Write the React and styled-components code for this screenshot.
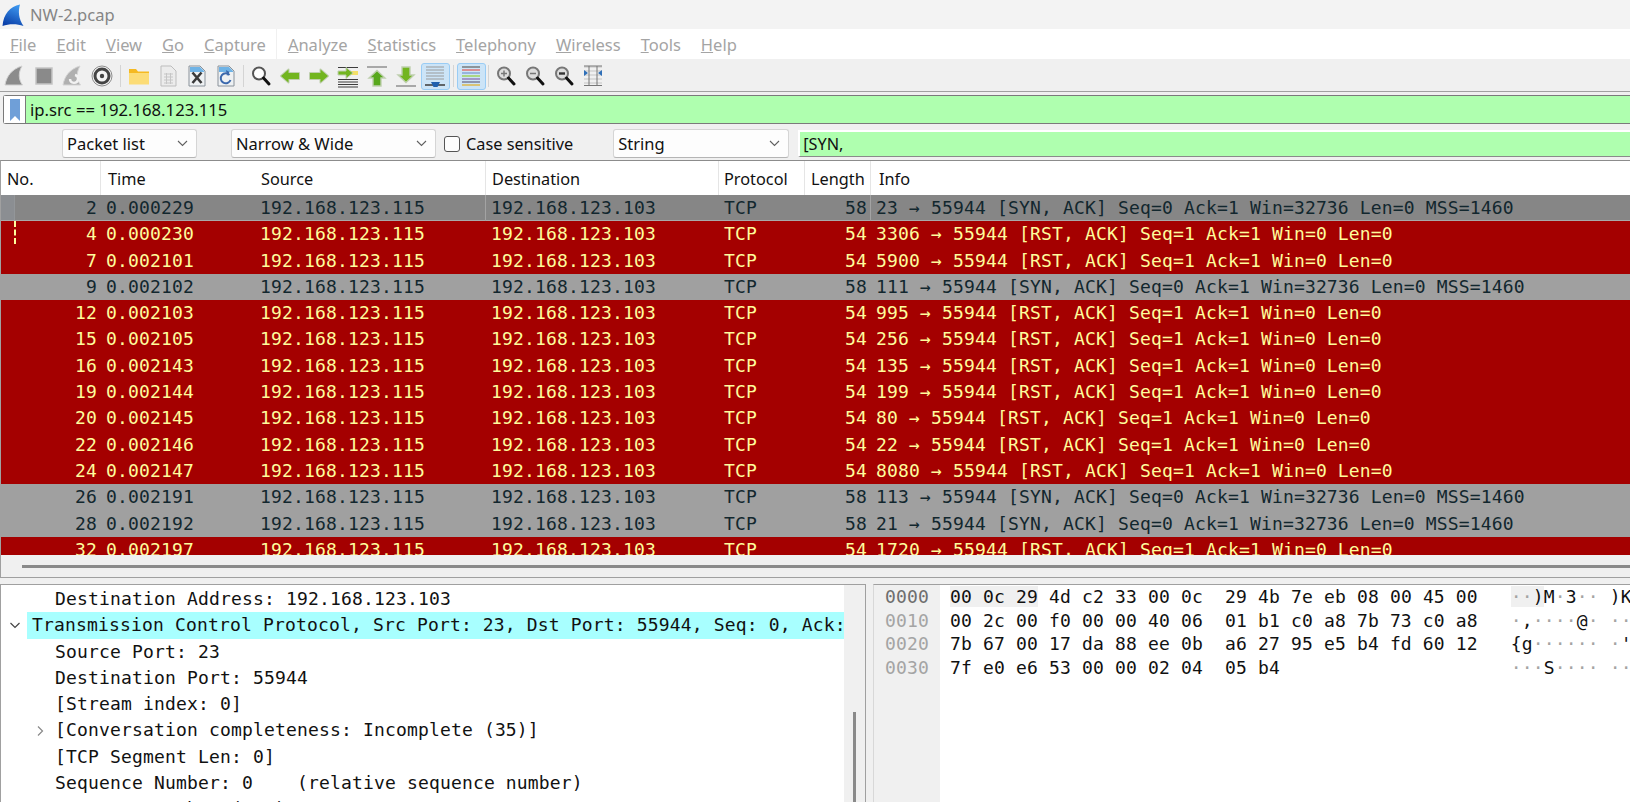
import React from 'react';
import styled, { createGlobalStyle } from 'styled-components';

const GlobalStyle = createGlobalStyle`
    html, body {
        margin: 0;
        padding: 0;
        background: #f0f0f0;
    }
`;

const uiFont = `"Noto Sans", "Open Sans", sans-serif`;
const monoFont = `"DejaVu Sans Mono", "Liberation Mono", monospace`;

const Window = styled.div`
    background: #f0f0f0;
    display: flex;
    flex-direction: column;
    font-family: ${uiFont};
    height: 802px;
    overflow: hidden;
    width: 1630px;
`;

const TitleBar = styled.div`
    align-items: center;
    background: #f3f3f3;
    color: #858585;
    display: flex;
    flex-shrink: 0;
    font-size: 16.5px;
    gap: 5px;
    height: 29px;
    padding-left: 1px;
`;

const MenuBar = styled.div`
    align-items: center;
    background: #fff;
    border-bottom: 1px solid #f0f0f0;
    display: flex;
    flex-shrink: 0;
    height: 30px;
    padding-left: 10px;
`;

const MenuItem = styled.span`
    color: #a4a4a4;
    font-size: 16.5px;
    margin-right: 20px;

    &::first-letter {
        text-decoration: underline;
    }
`;

const MenuDivider = styled.span`
    background: #f0f0f0;
    height: 30px;
    margin-right: 11px;
    margin-left: -10px;
    width: 1px;
`;

const Toolbar = styled.div`
    align-items: center;
    background: #f0f0f0;
    border-bottom: 1px solid #a0a0a0;
    box-sizing: border-box;
    display: flex;
    flex-shrink: 0;
    height: 32px;
    padding: 1px 0 0 0.5px;
`;

const ToolButton = styled.div`
    align-items: center;
    background: ${(p) => (p.$active ? '#cce4f7' : 'transparent')};
    border: 1px solid ${(p) => (p.$active ? '#99ccf5' : 'transparent')};
    border-radius: 3px;
    box-sizing: border-box;
    display: flex;
    flex-shrink: 0;
    height: 27px;
    justify-content: center;
    width: 29px;
`;

const ToolSeparator = styled.span`
    background: #d4d4d4;
    flex-shrink: 0;
    height: 22px;
    margin: 0 ${(p) => p.$margin}px;
    width: 1px;
`;

const FilterBar = styled.div`
    align-items: stretch;
    border: solid #7a7a7a;
    border-radius: 3px 0 0 3px;
    border-width: 1px 0 1px 1px;
    box-sizing: border-box;
    display: flex;
    flex-shrink: 0;
    height: 29px;
    margin: 3px 0 3px 3px;
`;

const BookmarkButton = styled.div`
    align-items: center;
    background: #fff;
    border-right: 1px solid #7a7a7a;
    display: flex;
    flex-shrink: 0;
    justify-content: center;
    width: 21px;
`;

const FilterText = styled.div`
    align-items: center;
    background: #afffaf;
    color: #111;
    display: flex;
    flex: 1;
    font-size: 16.7px;
    padding-left: 4px;
`;

const FindBar = styled.div`
    align-items: center;
    display: flex;
    flex-shrink: 0;
    height: 33px;
    padding-left: 62px;
`;

const Select = styled.div`
    align-items: center;
    background: #fdfdfd;
    border: 1px solid #d5d5d5;
    border-bottom-color: #b5b5b5;
    border-radius: 3px;
    box-sizing: border-box;
    color: #111;
    display: flex;
    flex-shrink: 0;
    font-size: 16.5px;
    height: 29px;
    justify-content: space-between;
    margin-right: ${(p) => p.$gap}px;
    padding: 0 8px 0 4px;
    width: ${(p) => p.$width}px;
`;

const CaseCheck = styled.label`
    align-items: center;
    color: #111;
    display: flex;
    flex-shrink: 0;
    font-size: 16.3px;
    gap: 6px;
    margin-right: 40px;
`;

const CheckBox = styled.span`
    background: #fdfdfd;
    border: 1px solid #555;
    border-radius: 3px;
    box-sizing: border-box;
    height: 16px;
    width: 16px;
`;

const FindInput = styled.div`
    align-items: center;
    background: #afffaf;
    border-bottom: 1px solid #8a8a8a;
    border-left: 2px solid #fff;
    border-top: 2px solid #fff;
    box-sizing: border-box;
    color: #111;
    display: flex;
    flex: 1;
    font-size: 16.3px;
    height: 27px;
    padding-left: 3px;
`;

const PacketPane = styled.div`
    border-left: 1px solid #a0a0a0;
    border-top: 1px solid #8c8c8c;
    display: flex;
    flex-direction: column;
    flex-shrink: 0;
    height: 417px;
`;

const columns = '100px 154px 231px 233px 86px 66px 1fr';

const HeaderRow = styled.div`
    background: #fff;
    display: grid;
    flex-shrink: 0;
    font-size: 16.3px;
    grid-template-columns: ${columns};
    height: 34px;
`;

const HeaderCell = styled.div`
    align-items: center;
    border-right: 1px solid ${(p) => (p.$plain ? 'transparent' : '#e5e5e5')};
    box-sizing: border-box;
    color: #111;
    display: flex;
    padding: 1px 0 0 ${(p) => p.$pad || 6}px;
`;

const PacketRows = styled.div`
    flex-shrink: 0;
    height: 360px;
    overflow: hidden;
`;

const palette = {
    selected: { background: '#868686', color: '#12272e' },
    ack: { background: '#a0a0a0', color: '#12272e' },
    reset: { background: '#a40000', color: '#fffc9c' },
};

const PacketRow = styled.div`
    background: ${(p) => palette[p.$kind].background};
    box-shadow: ${(p) => (p.$kind === 'selected' ? 'inset 0 -1px 0 #a9a9a9' : 'none')};
    color: ${(p) => palette[p.$kind].color};
    display: grid;
    font-family: ${monoFont};
    font-size: 18px;
    grid-template-columns: ${columns};
    height: 26.3px;
    letter-spacing: 0.16px;
    line-height: 25px;
    white-space: pre;
`;

const Cell = styled.div`
    border-right: 1px solid ${(p) => (p.$rule ? '#a3a3a3' : 'transparent')};
    box-sizing: border-box;
    overflow: hidden;
    padding: ${(p) => (p.$end ? '0 3px 0 0' : '0 0 0 5px')};
    position: relative;
    text-align: ${(p) => (p.$end ? 'right' : 'left')};
`;

const RelatedMark = styled.span`
    border-left: 2px dashed #fffc9c;
    height: 23px;
    left: 13px;
    position: absolute;
    top: 0;
`;

const SelectedStrip = styled.span`
    background: #8b8e92;
    border-right: 1px solid #939699;
    bottom: 1px;
    left: 0;
    position: absolute;
    top: 0;
    width: 13px;
`;

const HScroll = styled.div`
    align-items: center;
    border-bottom: 1px solid #a0a0a0;
    display: flex;
    flex: 1;
    padding-left: 21px;
`;

const HThumb = styled.div`
    background: #8a8a8a;
    flex: 1;
    height: 3px;
`;

const BottomArea = styled.div`
    display: flex;
    flex: 1;
    gap: 7px;
    margin-top: 6px;
    min-height: 0;
`;

const DetailPane = styled.div`
    background: #fff;
    border-left: 1px solid #a0a0a0;
    border-right: 1px solid #a0a0a0;
    border-top: 1px solid #a0a0a0;
    box-sizing: border-box;
    display: flex;
    flex-shrink: 0;
    width: 866px;
`;

const DetailTree = styled.div`
    flex: 1;
    font-family: ${monoFont};
    font-size: 18px;
    letter-spacing: 0.16px;
    min-width: 0;
    overflow: hidden;
    padding-top: 1px;
`;

const TreeRow = styled.div`
    align-items: center;
    color: #111;
    display: flex;
    height: 26.3px;
    padding-left: ${(p) => p.$indent}px;
    position: relative;
    white-space: pre;
`;

const TreeLabel = styled.span`
    align-self: stretch;
    background: ${(p) => (p.$selected ? '#a8ffff' : 'transparent')};
    flex: ${(p) => (p.$selected ? 1 : '0 0 auto')};
    line-height: 26px;
    overflow: hidden;
    padding-left: ${(p) => (p.$selected ? 5 : 0)}px;
`;

const Expander = styled.svg`
    flex-shrink: 0;
    height: 12px;
    margin-right: ${(p) => p.$gap}px;
    width: 12px;
`;

const DetailScroll = styled.div`
    background: #f0f0f0;
    box-sizing: border-box;
    display: flex;
    flex-direction: column;
    flex-shrink: 0;
    justify-content: flex-end;
    padding: 0 9px;
    width: 21px;
`;

const VThumb = styled.div`
    background: #8a8a8a;
    height: 90px;
    width: 3px;
`;

const HexPane = styled.div`
    background: #fff;
    border-left: 1px solid #d8d8d8;
    border-top: 1px solid #a0a0a0;
    display: flex;
    flex: 1;
    font-family: ${monoFont};
    font-size: 18px;
    letter-spacing: 0.16px;
    min-width: 0;
    overflow: hidden;
`;

const OffsetColumn = styled.div`
    background: #f0f0f0;
    flex-shrink: 0;
    padding-left: 11px;
    width: 55px;
`;

const Offset = styled.div`
    color: ${(p) => (p.$current ? '#6e6e6e' : '#a4a4a4')};
    height: 23.7px;
    line-height: 24px;
`;

const HexColumn = styled.div`
    flex: 1;
    min-width: 0;
    padding-left: 10px;
`;

const HexLine = styled.div`
    color: #111;
    height: 23.7px;
    line-height: 24px;
    white-space: pre;
`;

const HexMark = styled.span`
    background: #f0f0f0;
`;

const Dim = styled.span`
    color: #a4a4a4;
`;

function ToolIcon({ children }) {
    return (
        <svg width="24" height="24" viewBox="0 0 24 24">
            {children}
        </svg>
    );
}

const FinShape = 'M2 21 C3.5 12 9 5 19 2 C15.5 8 15 15 19.5 21 Z';

function SharkLogo() {
    return (
        <svg width="24" height="24" viewBox="0 0 24 24">
            <defs>
                <linearGradient id="logoFin" x1="0.7" y1="0" x2="0.3" y2="1">
                    <stop offset="0" stopColor="#3f9bf2" />
                    <stop offset="1" stopColor="#0a3fa8" />
                </linearGradient>
            </defs>
            <path d="M1.5 23 C2.5 11 9 3.5 19 1.5 C17 8 17.5 16 22.5 23 C16 20.5 8 20.5 1.5 23 Z" fill="url(#logoFin)" />
        </svg>
    );
}

function MagnifierIcon({ sign }) {
    return (
        <ToolIcon>
            <circle cx="10" cy="9.5" r="6" fill={sign ? '#ddd' : '#fff'} stroke={sign ? '#777' : '#555'} strokeWidth="2" />
            <path d="M14.5 14 L20 20" stroke="#111" strokeWidth="3" strokeLinecap="round" />
            {sign && <path d="M7 9.5 H13" stroke={sign === 'reset' ? '#333' : '#777'} strokeWidth={sign === 'reset' ? 2.4 : 1.5} />}
            {sign === 'plus' && <path d="M10 6.5 V12.5" stroke="#777" strokeWidth="1.5" />}
        </ToolIcon>
    );
}

function GreenArrow({ rotate = 0 }) {
    return (
        <ToolIcon>
            <g transform={`rotate(${rotate} 12 12)`}>
                <path d="M3 12 L10.5 5.5 V9 H21 V15 H10.5 V18.5 Z" fill="#72b51f" stroke="#bfcfae" strokeWidth="2" strokeLinejoin="round" paintOrder="stroke" />
            </g>
        </ToolIcon>
    );
}

function PageIcon({ children }) {
    return (
        <ToolIcon>
            <path d="M4 2 H15 L20 7 V22 H4 Z" fill="#eef1f3" stroke="#8a929a" strokeWidth="1" />
            <path d="M5 3 H15 L19 7 V8 H5 Z" fill="#6fb3e6" />
            {children}
        </ToolIcon>
    );
}

const toolIcons = {
    start: (
        <ToolIcon>
            <path d={FinShape} fill="#8c8c8c" stroke="#d0d0d0" />
        </ToolIcon>
    ),
    stop: (
        <ToolIcon>
            <rect x="4" y="4" width="16" height="16" fill="#8a8a8a" stroke="#c4c4c4" strokeWidth="1.5" />
        </ToolIcon>
    ),
    restart: (
        <ToolIcon>
            <path d={FinShape} fill="#b0b0b0" stroke="#d4d4d4" />
            <path d="M9 15 A4 4 0 1 0 14 11" fill="none" stroke="#f2f2f2" strokeWidth="2.4" />
        </ToolIcon>
    ),
    options: (
        <ToolIcon>
            <circle cx="12" cy="12" r="10" fill="#f4f4f4" stroke="#8c8c8c" />
            <circle cx="12" cy="12" r="7" fill="none" stroke="#444" strokeWidth="3" />
            <circle cx="12" cy="12" r="2.2" fill="#444" />
        </ToolIcon>
    ),
    open: (
        <ToolIcon>
            <path d="M2 5 H9 L11 7.5 H22 V20 H2 Z" fill="#f5b921" />
            <rect x="2" y="9" width="20" height="11.5" fill="#fcdc76" />
        </ToolIcon>
    ),
    save: (
        <ToolIcon>
            <path d="M5 2 H15 L20 7 V22 H5 Z" fill="#ececec" stroke="#bdbdbd" />
            <path d="M8 10 H17 M8 13 H17 M8 16 H17 M8 19 H17 M10.5 9 V20 M14.5 9 V20" stroke="#c6c6c6" strokeWidth="1" />
        </ToolIcon>
    ),
    close: (
        <PageIcon>
            <path d="M7.5 8.5 L16.5 19 M16.5 8.5 L7.5 19" stroke="#3a3a3a" strokeWidth="2.6" />
        </PageIcon>
    ),
    reload: (
        <PageIcon>
            <path d="M15.5 11 A5 5 0 1 0 16.5 16" fill="none" stroke="#3a68ad" strokeWidth="2" />
            <path d="M12 6 L15.5 8 L13 12 Z" fill="#3a68ad" />
        </PageIcon>
    ),
    find: <MagnifierIcon />,
    back: <GreenArrow />,
    forward: <GreenArrow rotate={180} />,
    jump: (
        <ToolIcon>
            <path d="M2 3.5 H22 M2 18 H22 M2 20.5 H22 M2 23 H22 M2 15.5 H22" stroke="#3c3c3c" strokeWidth="1" />
            <rect x="14" y="7" width="8" height="4" fill="#f4e06a" />
            <path d="M2 7 H10 V3.5 L17 9 L10 14.5 V11 H2 Z" fill="#72b51f" stroke="#bfcfae" strokeWidth="1" />
        </ToolIcon>
    ),
    first: (
        <ToolIcon>
            <path d="M2 3 H22" stroke="#a8a8a8" strokeWidth="2" />
            <path d="M12 6.5 L20 14 H16 V22 H8 V14 H4 Z" fill="#58a81c" stroke="#bfcfae" strokeWidth="1.4" />
        </ToolIcon>
    ),
    last: (
        <ToolIcon>
            <path d="M2 22 H22" stroke="#a8a8a8" strokeWidth="2" />
            <path d="M12 18.5 L20 11 H16 V3 H8 V11 H4 Z" fill="#72b51f" stroke="#bfcfae" strokeWidth="1.4" />
        </ToolIcon>
    ),
    autoscroll: (
        <ToolIcon>
            <path d="M3 3 H21 M3 6 H21 M3 9 H21 M3 12 H21 M3 15 H21" stroke="#9a9a9a" strokeWidth="1" />
            <path d="M2 21 H22" stroke="#444" strokeWidth="1.6" />
            <path d="M8 18 H17 L14.5 23 H10.5 Z" fill="#1f5fae" />
        </ToolIcon>
    ),
    colorize: (
        <ToolIcon>
            <path d="M3 3 H21" stroke="#6a6a6a" strokeWidth="1.3" />
            <path d="M3 6 H21" stroke="#e0625f" strokeWidth="1.3" />
            <path d="M3 9 H21" stroke="#7a9ad0" strokeWidth="1.3" />
            <path d="M3 12 H21" stroke="#9ad048" strokeWidth="1.3" />
            <path d="M3 15 H21" stroke="#8a6fb0" strokeWidth="1.3" />
            <path d="M3 18 H21" stroke="#6a6a8a" strokeWidth="1.3" />
            <path d="M3 21 H21" stroke="#e0b030" strokeWidth="1.3" />
        </ToolIcon>
    ),
    zoomIn: <MagnifierIcon sign="plus" />,
    zoomOut: <MagnifierIcon sign="minus" />,
    zoomReset: <MagnifierIcon sign="reset" />,
    resize: (
        <ToolIcon>
            <path d="M3 3 H21 M3 7 H21 M3 11 H21 M3 15 H21 M3 19 H21" stroke="#c4c4c4" strokeWidth="1" />
            <path d="M3 2 H21 M3 21.5 H21 M8 2 V22 M16 2 V22" stroke="#777" strokeWidth="1" />
            <path d="M3 6 L7 9 L3 12 Z M21 6 L17 9 L21 12 Z" fill="#2f6fb8" />
        </ToolIcon>
    ),
};

function Chevron() {
    return (
        <svg width="11" height="7" viewBox="0 0 11 7">
            <path d="M1 1 L5.5 5.5 L10 1" fill="none" stroke="#606060" strokeWidth="1.1" />
        </svg>
    );
}

const menus = ['File', 'Edit', 'View', 'Go', 'Capture', '|', 'Analyze', 'Statistics', 'Telephony', 'Wireless', 'Tools', 'Help'];

const reset = (no, time, port) => ({
    no,
    time,
    kind: 'reset',
    length: 54,
    info: `${port} → 55944 [RST, ACK] Seq=1 Ack=1 Win=0 Len=0`,
});

const synAck = (no, time, port, kind = 'ack') => ({
    no,
    time,
    kind,
    length: 58,
    info: `${port} → 55944 [SYN, ACK] Seq=0 Ack=1 Win=32736 Len=0 MSS=1460`,
});

const packets = [
    synAck(2, '0.000229', 23, 'selected'),
    reset(4, '0.000230', 3306),
    reset(7, '0.002101', 5900),
    synAck(9, '0.002102', 111),
    reset(12, '0.002103', 995),
    reset(15, '0.002105', 256),
    reset(16, '0.002143', 135),
    reset(19, '0.002144', 199),
    reset(20, '0.002145', 80),
    reset(22, '0.002146', 22),
    reset(24, '0.002147', 8080),
    synAck(26, '0.002191', 113),
    synAck(28, '0.002192', 21),
    reset(32, '0.002197', 1720),
];

const treeRows = [
    { text: 'Destination Address: 192.168.123.103', indent: 54 },
    { text: 'Transmission Control Protocol, Src Port: 23, Dst Port: 55944, Seq: 0, Ack:', indent: 8, open: true, selected: true },
    { text: 'Source Port: 23', indent: 54 },
    { text: 'Destination Port: 55944', indent: 54 },
    { text: '[Stream index: 0]', indent: 54 },
    { text: '[Conversation completeness: Incomplete (35)]', indent: 33, closed: true },
    { text: '[TCP Segment Len: 0]', indent: 54 },
    { text: 'Sequence Number: 0    (relative sequence number)', indent: 54 },
    { text: 'Sequence Number (raw): 3993740839', indent: 54 },
];

const hexLines = [
    {
        offset: '0000',
        content: (
            <>
                <HexMark>00 0c 29</HexMark> 4d c2 33 00 0c  29 4b 7e eb 08 00 45 00   <HexMark><Dim>··</Dim>)</HexMark>M<Dim>·</Dim>3<Dim>··</Dim> )K~<Dim>··</Dim> <Dim>·</Dim>E<Dim>·</Dim>
            </>
        ),
    },
    {
        offset: '0010',
        content: (
            <>
                00 2c 00 f0 00 00 40 06  01 b1 c0 a8 7b 73 c0 a8   <Dim>·</Dim>,<Dim>····</Dim>@<Dim>·</Dim> <Dim>····</Dim>{'{'}s<Dim>··</Dim>
            </>
        ),
    },
    {
        offset: '0020',
        content: (
            <>
                7b 67 00 17 da 88 ee 0b  a6 27 95 e5 b4 fd 60 12   {'{'}g<Dim>······</Dim> <Dim>·</Dim>'<Dim>····</Dim>`<Dim>·</Dim>
            </>
        ),
    },
    {
        offset: '0030',
        content: (
            <>
                7f e0 e6 53 00 00 02 04  05 b4                     <Dim>···</Dim>S<Dim>····</Dim> <Dim>··</Dim>
            </>
        ),
    },
];

function App() {
    return (
        <Window>
            <GlobalStyle />
            <TitleBar>
                <SharkLogo />
                NW-2.pcap
            </TitleBar>
            <MenuBar>
                {menus.map((label) => (label === '|'
                    ? <MenuDivider key={label} />
                    : <MenuItem key={label}>{label}</MenuItem>))}
            </MenuBar>
            <Toolbar>
                <ToolButton>{toolIcons.start}</ToolButton>
                <ToolButton>{toolIcons.stop}</ToolButton>
                <ToolButton>{toolIcons.restart}</ToolButton>
                <ToolButton>{toolIcons.options}</ToolButton>
                <ToolSeparator $margin={3.5} />
                <ToolButton>{toolIcons.open}</ToolButton>
                <ToolButton>{toolIcons.save}</ToolButton>
                <ToolButton>{toolIcons.close}</ToolButton>
                <ToolButton>{toolIcons.reload}</ToolButton>
                <ToolSeparator $margin={2.5} />
                <ToolButton>{toolIcons.find}</ToolButton>
                <ToolButton>{toolIcons.back}</ToolButton>
                <ToolButton>{toolIcons.forward}</ToolButton>
                <ToolButton>{toolIcons.jump}</ToolButton>
                <ToolButton>{toolIcons.first}</ToolButton>
                <ToolButton>{toolIcons.last}</ToolButton>
                <ToolButton $active>{toolIcons.autoscroll}</ToolButton>
                <ToolSeparator $margin={3} />
                <ToolButton $active>{toolIcons.colorize}</ToolButton>
                <ToolSeparator $margin={2.5} />
                <ToolButton>{toolIcons.zoomIn}</ToolButton>
                <ToolButton>{toolIcons.zoomOut}</ToolButton>
                <ToolButton>{toolIcons.zoomReset}</ToolButton>
                <ToolButton>{toolIcons.resize}</ToolButton>
            </Toolbar>
            <FilterBar>
                <BookmarkButton>
                    <svg width="12" height="24" viewBox="0 0 12 24">
                        <path d="M1 1 H11 V23 L6 18 L1 23 Z" fill="#6f9fd8" />
                    </svg>
                </BookmarkButton>
                <FilterText>ip.src == 192.168.123.115</FilterText>
            </FilterBar>
            <FindBar>
                <Select $width={135} $gap={34}>Packet list<Chevron /></Select>
                <Select $width={205} $gap={8}>Narrow &amp; Wide<Chevron /></Select>
                <CaseCheck><CheckBox />Case sensitive</CaseCheck>
                <Select $width={176} $gap={9}>String<Chevron /></Select>
                <FindInput>[SYN,</FindInput>
            </FindBar>
            <PacketPane>
                <HeaderRow>
                    <HeaderCell>No.</HeaderCell>
                    <HeaderCell $plain $pad={7}>Time</HeaderCell>
                    <HeaderCell>Source</HeaderCell>
                    <HeaderCell>Destination</HeaderCell>
                    <HeaderCell $pad={5}>Protocol</HeaderCell>
                    <HeaderCell>Length</HeaderCell>
                    <HeaderCell $plain $pad={8}>Info</HeaderCell>
                </HeaderRow>
                <PacketRows>
                    {packets.map((packet) => (
                        <PacketRow key={packet.no} $kind={packet.kind}>
                            <Cell $end>
                                {packet.kind === 'selected' && <SelectedStrip />}
                                {packet.no === 4 && <RelatedMark />}
                                {packet.no}
                            </Cell>
                            <Cell>{packet.time}</Cell>
                            <Cell $rule={packet.kind === 'selected'}>192.168.123.115</Cell>
                            <Cell>192.168.123.103</Cell>
                            <Cell>TCP</Cell>
                            <Cell $end $rule={packet.kind === 'selected'}>{packet.length}</Cell>
                            <Cell>{packet.info}</Cell>
                        </PacketRow>
                    ))}
                </PacketRows>
                <HScroll><HThumb /></HScroll>
            </PacketPane>
            <BottomArea>
                <DetailPane>
                    <DetailTree>
                        {treeRows.map((row) => (
                            <TreeRow key={row.text} $indent={row.indent}>
                                {row.open && (
                                    <Expander $gap={6} viewBox="0 0 12 12">
                                        <path d="M1.5 4 L6 8.5 L10.5 4" fill="none" stroke="#444" strokeWidth="1.2" />
                                    </Expander>
                                )}
                                {row.closed && (
                                    <Expander $gap={9} viewBox="0 0 12 12">
                                        <path d="M4 1.5 L8.5 6 L4 10.5" fill="none" stroke="#888" strokeWidth="1.2" />
                                    </Expander>
                                )}
                                <TreeLabel $selected={row.selected}>{row.text}</TreeLabel>
                            </TreeRow>
                        ))}
                    </DetailTree>
                    <DetailScroll><VThumb /></DetailScroll>
                </DetailPane>
                <HexPane>
                    <OffsetColumn>
                        {hexLines.map((line, index) => (
                            <Offset key={line.offset} $current={index === 0}>{line.offset}</Offset>
                        ))}
                    </OffsetColumn>
                    <HexColumn>
                        {hexLines.map((line) => (
                            <HexLine key={line.offset}>{line.content}</HexLine>
                        ))}
                    </HexColumn>
                </HexPane>
            </BottomArea>
        </Window>
    );
}

export default App;
